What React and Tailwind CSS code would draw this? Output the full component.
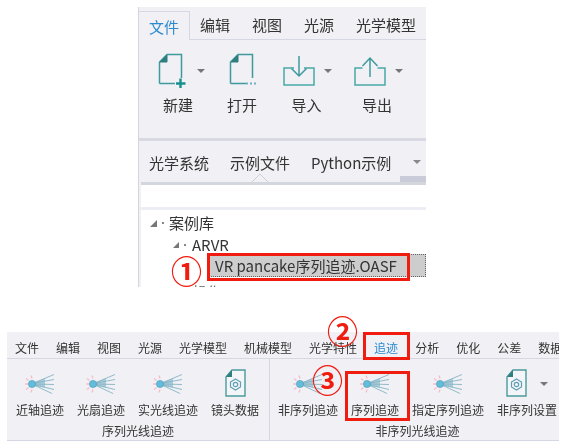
const FONT = 'font-["Noto_Sans_CJK_SC","Noto_Sans",sans-serif]';

const TOP_TABS = ['编辑', '视图', '光源', '光学模型'];
const MENU = ['文件', '编辑', '视图', '光源', '光学模型', '机械模型', '光学特性'];
const MENU_RIGHT = ['分析', '优化', '公差', '数据'];

function DocIcon({ plus, dots }) {
  return (
    <svg width="30" height="36" viewBox="0 0 30 36" fill="none">
      <path d="M1.5 30.5V9L9 1.5H23.5V25" stroke="#3f9a9d" strokeWidth="1.5" />
      <path d="M1.5 30.5H17" stroke="#3f9a9d" strokeWidth="1.5" />
      <path d="M2 9L9 2V9Z" fill="#2f7f7f" stroke="#2f7f7f" />
      {plus && <path d="M22.5 25.5V35M18 30.5H27.5" stroke="#17908f" strokeWidth="2.4" />}
      {dots && <path d="M17 30.5H19M21 30.5H23M25 30.5H27" stroke="#6fb0c4" strokeWidth="2" />}
    </svg>
  );
}

function TrayIcon({ up }) {
  return (
    <svg width="32" height="32" viewBox="0 0 32 32" fill="none">
      <path d={up ? 'M8.5 13H1V30H31V13H23.5' : 'M11 13H1V30H31V13H21'} stroke="#49a9a8" strokeWidth="1.5" />
      {up
        ? <path d="M16 22V3M8.5 11L16 3L23.5 11" stroke="#3f9a9d" strokeWidth="1.5" />
        : <path d="M16 1V21M8.5 13.5L16 21L23.5 13.5" stroke="#3f9a9d" strokeWidth="1.5" />}
    </svg>
  );
}

function Caret({ className = '' }) {
  return <span className={`w-0 h-0 border-x-[4px] border-x-transparent border-t-[4px] border-t-[#777] ${className}`} />;
}

function RayIcon() {
  return (
    <svg width="30" height="22" viewBox="0 0 30 22" fill="none">
      <path d="M7 5.5L6 2.5M7 16.5L6 19.5M3.5 7.5L1 5.5M3.5 14.5L1 16.5M3 11H0" stroke="#f6bccb" strokeWidth="1.3" />
      <path d="M10 9.5L29 1.5M10 10L29 6.5M10 11L29 11.5M10 12L29 16.5M10 12.5L27 20.5" stroke="#8fbccb" strokeWidth="1" />
      <path d="M10 9L20 5.5V14.5L10 13Z" fill="#7fb2c4" fillOpacity="0.6" />
      <circle cx="7" cy="11" r="3.6" fill="#63bcd9" stroke="#4c97b0" strokeWidth="0.6" />
    </svg>
  );
}

function LensDoc() {
  return (
    <svg width="21" height="28" viewBox="0 0 21 28" fill="none" className="-mt-[3px]">
      <path d="M1 8L7 1H20V27H1Z" fill="#f4f5f8" stroke="#4b9a9c" strokeWidth="1.4" />
      <path d="M1 8L7 1V8Z" fill="#2f7f7f" />
      <path d="M10.5 10L15.5 13V18L10.5 21L5.5 18V13Z" stroke="#5f9fb5" strokeWidth="1.2" />
      <circle cx="10.5" cy="15.5" r="2.2" stroke="#5f9fb5" strokeWidth="1.2" />
    </svg>
  );
}

function FileAction({ icon, label, caret, w, labelClass = '' }) {
  return (
    <div className="flex flex-col items-center" style={{ width: w }}>
      <div className="h-[36px] flex items-center gap-[9px]">
        {icon}
        {caret && <Caret />}
      </div>
      <span className={`mt-[5px] text-[15px] leading-[22px] text-[#333] ${labelClass}`}>{label}</span>
    </div>
  );
}

function TraceItem({ label, icon, caret }) {
  return (
    <div className="flex flex-col items-center shrink-0">
      <div className="h-[30px] flex items-center gap-[13px]">
        {icon}
        {caret && <Caret />}
      </div>
      <span className="mt-[2px] text-[12px] leading-[18px] text-[#333] whitespace-nowrap">{label}</span>
    </div>
  );
}

function TreeDot() {
  return <span className="w-[2px] h-[2px] bg-[#888]" />;
}

function Circled({ children, className }) {
  return (
    <span className={`absolute font-bold text-[31px] leading-none text-[#f01c10] ${className}`}>
      {children}
    </span>
  );
}

export default function App() {
  return (
    <div className={`relative w-[566px] h-[447px] overflow-hidden bg-white blur-[0.5px] ${FONT}`}>
      {/* upper panel */}
      <div className="absolute left-[138px] top-[7px] w-[288px] h-[280px] overflow-hidden bg-[#f0f0f5] border-l border-[#d4d6de] flex flex-col">
        <div className="h-[33px] shrink-0 flex items-end border-b border-[#d5d7e3]">
          <div className="w-[52px] h-[29px] -mb-px ml-[-1px] bg-[#f0f0f5] border border-b-0 border-[#d5d7e3] text-center text-[15px] leading-[29px] text-[#2a8ad0]">文件</div>
          <div className="flex gap-[22px] pl-[10px] h-[28px] text-[15px] leading-[27px] text-[#333] whitespace-nowrap">
            {TOP_TABS.map((t) => <span key={t}>{t}</span>)}
          </div>
        </div>

        <div className="h-[101px] shrink-0 pt-[13px] pl-[19px] flex items-start border-b-[3px] border-[#d8d9e2]">
          <FileAction w={46} icon={<DocIcon plus />} caret label="新建" labelClass="-ml-[6px]" />
          <div className="w-[25px]" />
          <FileAction w={30} icon={<DocIcon dots />} label="打开" labelClass="-ml-[4px]" />
          <div className="w-[24px]" />
          <FileAction w={49} icon={<TrayIcon />} caret label="导入" labelClass="-ml-[2px]" />
          <div className="w-[22px]" />
          <FileAction w={48} icon={<TrayIcon up />} caret label="导出" labelClass="-ml-[2px]" />
        </div>

        <div className="relative h-[41px] shrink-0 flex items-start pl-[10px] pt-[10px] gap-[21px] text-[15px] leading-[24px] text-[#333] whitespace-nowrap">
          <span>光学系统</span>
          <span>示例文件</span>
          <span>Python示例</span>
          <Caret className="absolute left-[274px] top-[19px] border-t-[#888]" />
          <div className="absolute right-0 bottom-0 w-[26px] h-[6px] bg-[#c9cbd8]" />
          <svg width="16" height="9" viewBox="0 0 16 9" fill="none" className="absolute left-[113px] bottom-0">
            <path d="M0 9L8 1L16 9" fill="#f0f0f5" stroke="#ccced8" />
          </svg>
        </div>

        <div className="h-[3px] shrink-0 ml-[2px] bg-[#d4d6de]" />
        <div className="h-[22px] shrink-0 ml-[2px] bg-white" />
        <div className="h-[3px] shrink-0 bg-[#eceef3]" />

        {/* case tree */}
        <div className="flex-1 min-h-0 overflow-hidden ml-[2px] bg-white text-[#333] text-[15px] whitespace-nowrap">
          <div className="h-[24px] mt-[1px] pl-[9px] flex items-center gap-[5px]">
            <span className="w-0 h-0 border-l-[7px] border-l-transparent border-b-[7px] border-b-[#777]" />
            <TreeDot />
            <span>案例库</span>
          </div>
          <div className="h-[20px] pl-[32px] flex items-center gap-[5px]">
            <span className="w-0 h-0 border-l-[6px] border-l-transparent border-b-[6px] border-b-[#777]" />
            <TreeDot />
            <span className="ml-[1px]">ARVR</span>
          </div>
          <div className="h-[23px] mt-[-1px] ml-[66px] pl-[7px] bg-[#cdcdcd] border border-dotted border-[#666] leading-[21px]">
            VR pancake序列追迹.OASF
          </div>
          <div className="pl-[52px] pt-[5px] text-[14px] text-[#666] leading-[18px]">操作</div>
        </div>
      </div>

      {/* lower ribbon */}
      <div className="absolute left-[7px] top-[332px] w-[552px] h-[109px] overflow-hidden bg-[#f0f0f5] border-b border-[#d5d7e3] flex flex-col">
        <div className="h-[27px] shrink-0 flex items-center pl-[8px] pt-[5px] gap-[17px] border-b border-[#d5d7e3] text-[12px] text-[#333] whitespace-nowrap">
          {MENU.map((m) => <span key={m}>{m}</span>)}
          <span className="text-[#2a8ad0]">追迹</span>
          {MENU_RIGHT.map((m) => <span key={m}>{m}</span>)}
        </div>
        <div className="flex-1 flex min-h-0">
          <div className="w-[263px] shrink-0 border-r border-[#d5d7e3] flex flex-col items-center">
            <div className="h-[63px] pt-[10px] pl-[9px] flex gap-[13px] self-start">
              <TraceItem label="近轴追迹" icon={<RayIcon />} />
              <TraceItem label="光扇追迹" icon={<RayIcon />} />
              <TraceItem label="实光线追迹" icon={<RayIcon />} />
              <TraceItem label="镜头数据" icon={<LensDoc />} />
            </div>
            <span className="text-[12px] leading-[18px] text-[#333]">序列光线追迹</span>
          </div>
          <div className="flex-1 flex flex-col items-center">
            <div className="h-[63px] pt-[10px] pl-[8px] flex gap-[13px] self-start">
              <TraceItem label="非序列追迹" icon={<RayIcon />} />
              <TraceItem label="序列追迹" icon={<RayIcon />} />
              <TraceItem label="指定序列追迹" icon={<RayIcon />} />
              <TraceItem label="非序列设置" icon={<LensDoc />} caret />
            </div>
            <span className="text-[12px] leading-[18px] text-[#333] ml-[6px]">非序列光线追迹</span>
          </div>
        </div>
      </div>

      {/* callouts */}
      <div className="absolute left-[207px] top-[253px] w-[203px] h-[28px] border-[3px] border-[#f01c10]" />
      <div className="absolute left-[363px] top-[332px] w-[47px] h-[28px] border-[3px] border-[#f01c10]" />
      <div className="absolute left-[345px] top-[371px] w-[65px] h-[50px] border-[3px] border-[#f01c10]" />
      <Circled className="left-[171px] top-[254px]">①</Circled>
      <Circled className="left-[327px] top-[314px]">②</Circled>
      <Circled className="left-[312px] top-[363px]">③</Circled>
    </div>
  );
}
